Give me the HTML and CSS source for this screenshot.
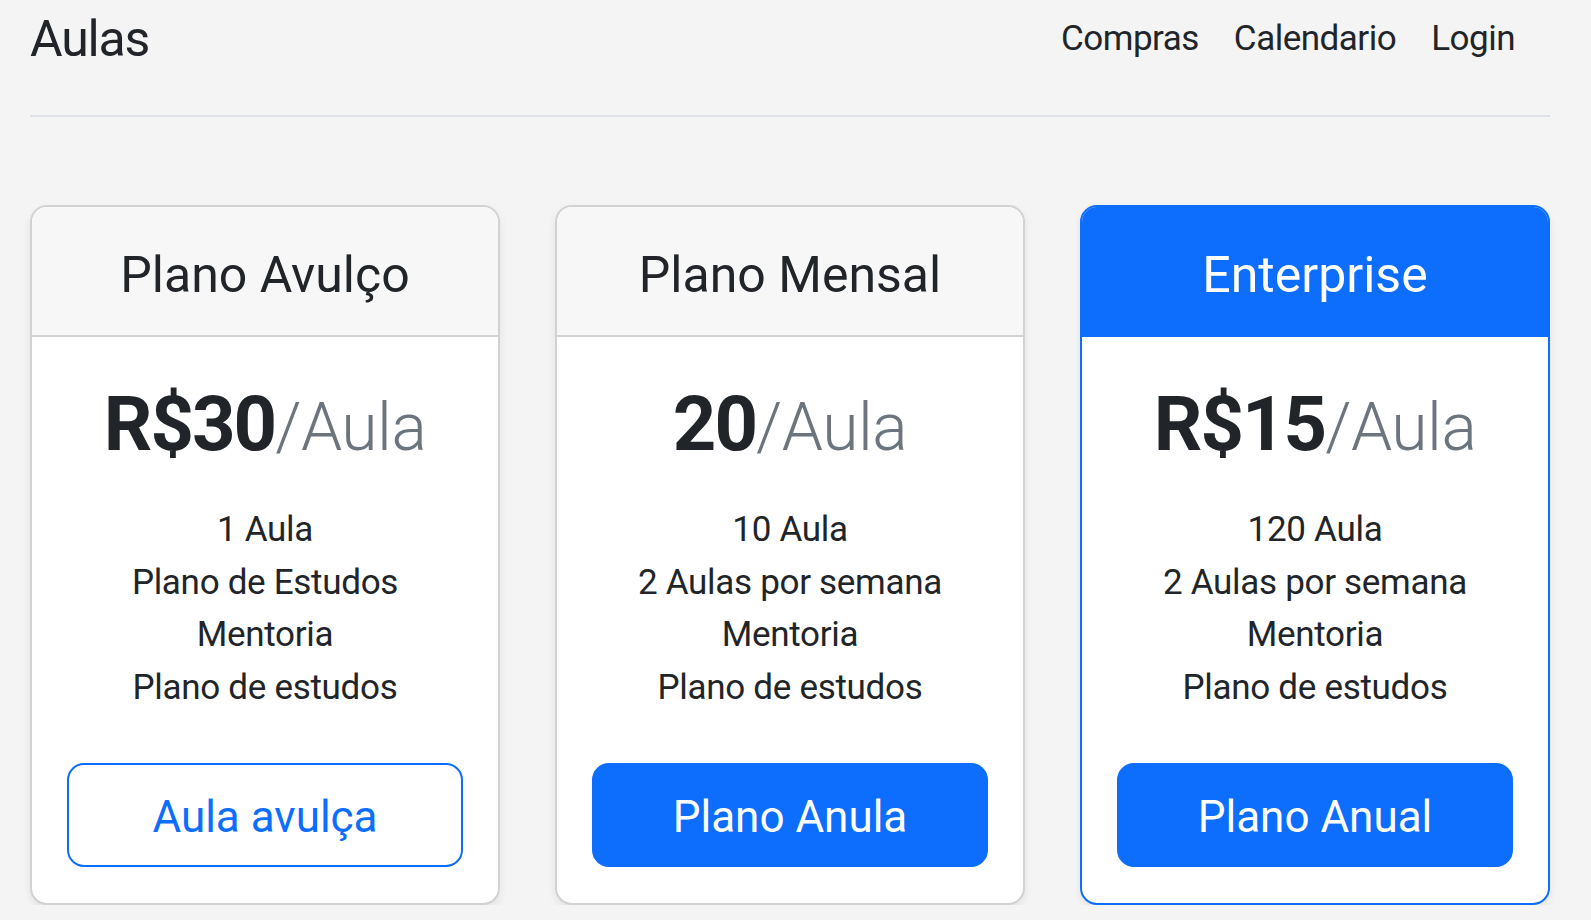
FILE: index.html
```html
<!DOCTYPE html>
<html lang="pt-BR">
<head>
<meta charset="utf-8">
<title>Aulas</title>
<link rel="stylesheet" href="styles.css">
</head>
<body>
<div class="container">
  <header class="topbar">
    <span class="brand">Aulas</span>
    <nav class="nav">
      <a class="nav-link" href="#">Compras</a>
      <a class="nav-link" href="#">Calendario</a>
      <a class="nav-link" href="#">Login</a>
    </nav>
  </header>

  <main class="plans">
    <div class="card">
      <div class="card-header"><h4 class="card-title">Plano Avulço</h4></div>
      <div class="card-body">
        <h1 class="price">R$30<small class="per">/Aula</small></h1>
        <ul class="features">
          <li>1 Aula</li>
          <li>Plano de Estudos</li>
          <li>Mentoria</li>
          <li>Plano de estudos</li>
        </ul>
        <button class="btn btn-outline" type="button">Aula avulça</button>
      </div>
    </div>

    <div class="card">
      <div class="card-header"><h4 class="card-title">Plano Mensal</h4></div>
      <div class="card-body">
        <h1 class="price">20<small class="per">/Aula</small></h1>
        <ul class="features">
          <li>10 Aula</li>
          <li>2 Aulas por semana</li>
          <li>Mentoria</li>
          <li>Plano de estudos</li>
        </ul>
        <button class="btn btn-primary" type="button">Plano Anula</button>
      </div>
    </div>

    <div class="card card-primary">
      <div class="card-header"><h4 class="card-title">Enterprise</h4></div>
      <div class="card-body">
        <h1 class="price">R$15<small class="per">/Aula</small></h1>
        <ul class="features">
          <li>120 Aula</li>
          <li>2 Aulas por semana</li>
          <li>Mentoria</li>
          <li>Plano de estudos</li>
        </ul>
        <button class="btn btn-primary" type="button">Plano Anual</button>
      </div>
    </div>
  </main>
</div>
</body>
</html>
```

FILE: styles.css
```css
* { box-sizing: border-box; }

html, body {
  margin: 0;
  padding: 0;
}

body {
  background: #f4f4f4;
  color: #212529;
  font-family: Roboto, "Open Sans", "Liberation Sans", sans-serif;
  font-size: 35px;
  line-height: 1.5;
}

.container {
  width: 1550px;
  padding-left: 30px;
}

.topbar {
  display: flex;
  justify-content: space-between;
  align-items: flex-start;
  height: 117px;
  border-bottom: 2px solid #dee2e6;
}

.brand {
  font-size: 50px;
  line-height: 78px;
  letter-spacing: -1.2px;
  color: #212529;
}

.nav {
  display: flex;
  padding-top: 13px;
}

.nav-link {
  margin-right: 35px;
  font-size: 35px;
  line-height: 52px;
  letter-spacing: -0.5px;
  color: #212529;
  text-decoration: none;
}

.plans {
  display: grid;
  grid-template-columns: repeat(3, 1fr);
  column-gap: 55px;
  margin-top: 88px;
}

.card {
  display: flex;
  flex-direction: column;
  background: #fff;
  border: 2px solid #d2d2d2;
  border-radius: 17px;
  box-shadow: 0 4px 9px rgba(0, 0, 0, 0.075);
  overflow: hidden;
  text-align: center;
}

.card-header {
  padding: 38px 0 30px;
  background: #f7f7f7;
  border-bottom: 2px solid #d2d2d2;
}

.card-title {
  margin: 0;
  font-size: 50px;
  line-height: 60px;
  font-weight: 400;
}

.card-primary {
  border-color: #0d6efd;
}

.card-primary .card-header {
  background: #0d6efd;
  border-bottom-color: #0d6efd;
  color: #fff;
}

.card-body {
  padding: 35px 35px 36px;
}

.price {
  margin: 0;
  font-size: 76px;
  line-height: 105px;
  font-weight: 700;
  letter-spacing: -2px;
}

.per {
  font-size: 66px;
  font-weight: 300;
  color: #6c757d;
  letter-spacing: -0.5px;
}

.features {
  list-style: none;
  margin: 24px 0 49px;
  padding: 0;
  font-size: 35px;
  line-height: 52.5px;
  letter-spacing: -0.3px;
}

.btn {
  display: block;
  width: 100%;
  padding: 19px 35px 15px;
  font-family: inherit;
  font-size: 44px;
  line-height: 66px;
  border: 2px solid #0d6efd;
  border-radius: 17px;
  cursor: pointer;
}

.btn-outline {
  background: #fff;
  color: #0d6efd;
}

.btn-primary {
  background: #0d6efd;
  color: #fff;
}
```
